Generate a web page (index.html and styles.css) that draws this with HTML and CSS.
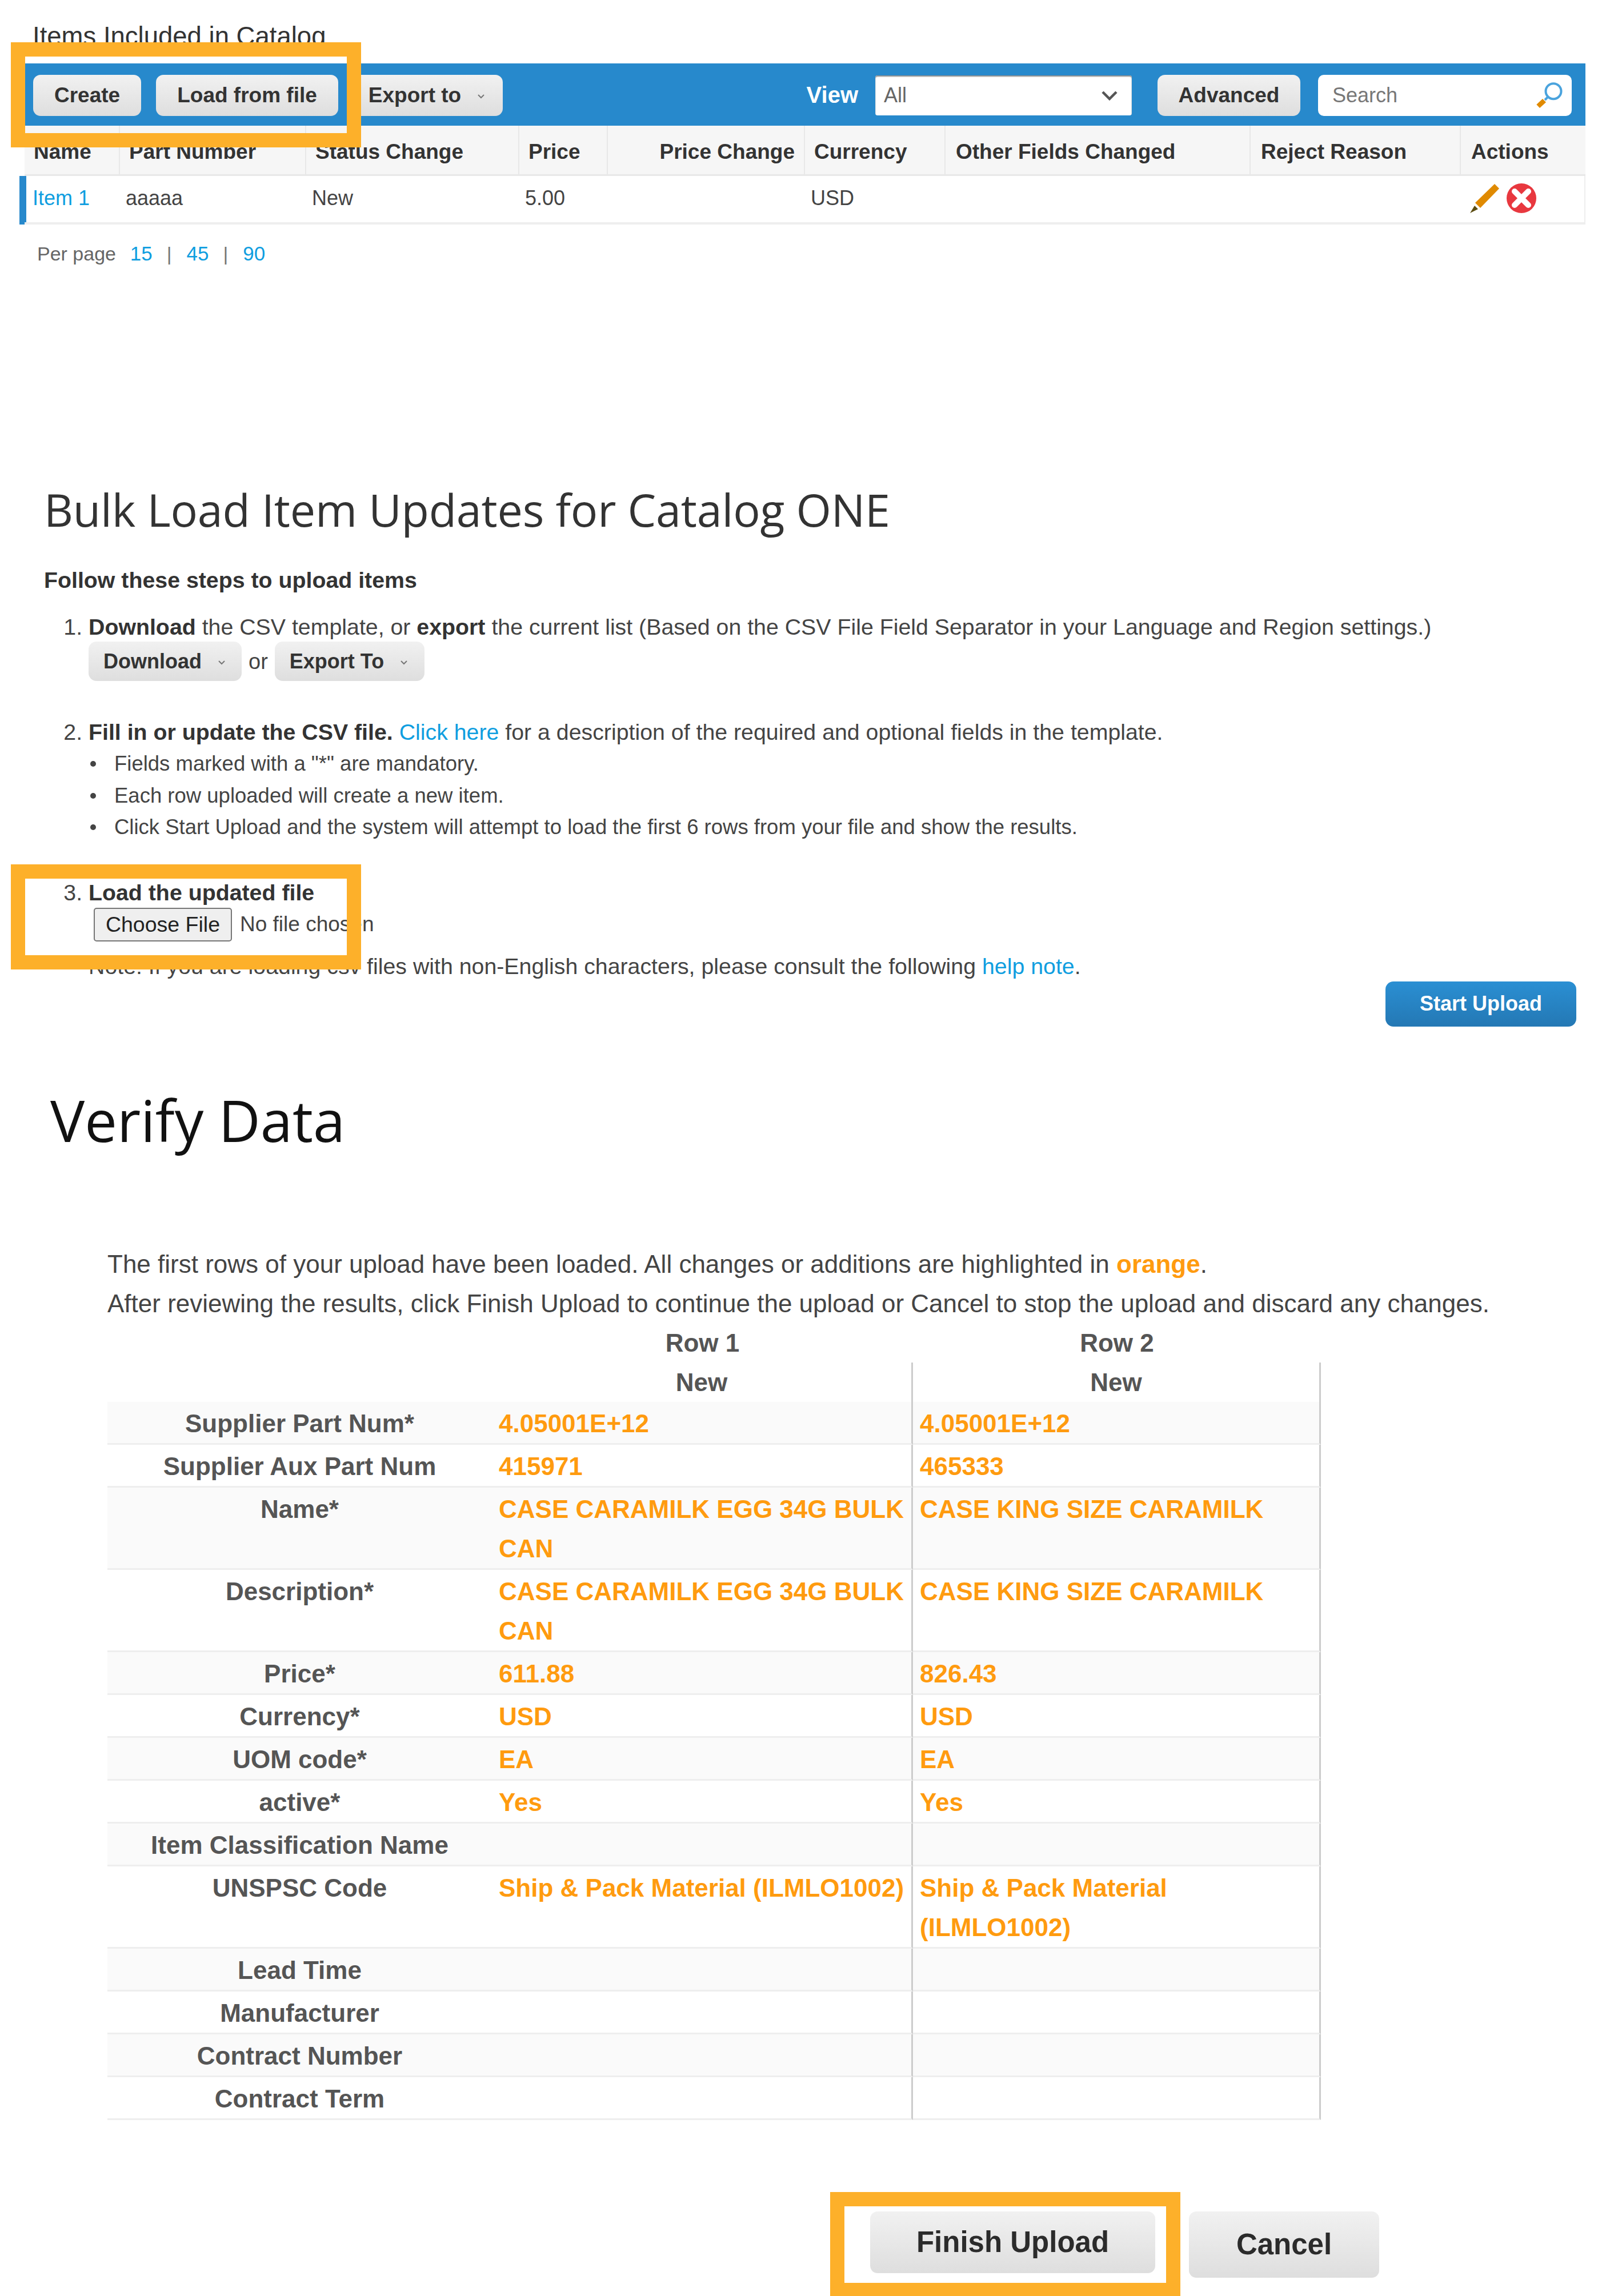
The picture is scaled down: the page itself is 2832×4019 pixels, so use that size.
FILE: index.html
```html
<!DOCTYPE html>
<html lang="en">
<head>
    <meta charset="UTF-8">
    <title>Catalog Upload Steps</title>
    <link rel="stylesheet" href="styles.css">
</head>
<body>
    <!-- Step 1: items list -->
    <section class="catalog">
        <h2 class="catalog-title">Items Included in Catalog</h2>
        <div class="toolbar">
            <button class="btn">Create</button>
            <button class="btn">Load from file</button>
            <button class="btn btn-export">Export to
                <svg class="caret" viewBox="0 0 14 9"><path d="M2 2l5 5 5-5"/></svg>
            </button>
            <span class="view-label">View</span>
            <div class="view-select">
                <span>All</span>
                <svg class="select-caret" viewBox="0 0 30 18"><path d="M3 3l12 12L27 3"/></svg>
            </div>
            <button class="btn btn-advanced">Advanced</button>
            <div class="search">
                <span>Search</span>
                <svg class="search-icon" viewBox="0 0 46 46">
                    <circle cx="30" cy="15.7" r="13.5"/>
                    <path class="search-neck" d="M20 26l-5 5"/>
                    <path class="search-handle" d="M0.3 39L11 29l6 6L6 45z"/>
                </svg>
            </div>
        </div>
        <table class="items">
            <colgroup>
                <col class="c-name"><col class="c-part"><col class="c-status"><col class="c-price">
                <col class="c-change"><col class="c-currency"><col class="c-other"><col class="c-reject"><col class="c-actions">
            </colgroup>
            <thead>
                <tr>
                    <th>Name</th>
                    <th>Part Number</th>
                    <th>Status Change</th>
                    <th>Price</th>
                    <th class="align-right">Price Change</th>
                    <th>Currency</th>
                    <th>Other Fields Changed</th>
                    <th>Reject Reason</th>
                    <th>Actions</th>
                </tr>
            </thead>
            <tbody>
                <tr>
                    <td class="item-name"><a href="#">Item 1</a></td>
                    <td>aaaaa</td>
                    <td>New</td>
                    <td>5.00</td>
                    <td></td>
                    <td>USD</td>
                    <td></td>
                    <td></td>
                    <td class="item-actions">
                        <div class="action-icons">
                            <svg class="action-icon" viewBox="0 0 52 52">
                                <path fill="#e08a00" d="M43 1l8 8-33 34-9-9z"/>
                                <path fill="#5c4d12" d="M8 39l6 6-14 7z"/>
                            </svg>
                            <svg class="action-icon" viewBox="0 0 52 52">
                                <circle cx="26" cy="26" r="26" fill="#e8383f"/>
                                <path d="M14 14l24 24M38 14L14 38" stroke="#fff" stroke-width="10" stroke-linecap="round"/>
                            </svg>
                        </div>
                    </td>
                </tr>
            </tbody>
        </table>
        <div class="per-page">
            <span class="per-page-label">Per page</span>
            <a href="#">15</a><span class="pipe">|</span><a href="#">45</a><span class="pipe">|</span><a href="#">90</a>
        </div>
        <div class="frame frame-top"></div>
    </section>

    <!-- Step 2: bulk load -->
    <section class="bulk">
        <h1 class="bulk-title">Bulk Load Item Updates for Catalog ONE</h1>
        <p class="bulk-lead">Follow these steps to upload items</p>
        <ol class="steps">
            <li>
                <b>Download</b> the CSV template, or <b>export</b> the current list (Based on the CSV File Field Separator in your Language and Region settings.)
                <div class="step-actions">
                    <button class="btn btn-small btn-download">Download
                        <svg class="caret" viewBox="0 0 14 9"><path d="M2 2l5 5 5-5"/></svg>
                    </button>
                    <span class="step-or">or</span>
                    <button class="btn btn-small">Export To
                        <svg class="caret" viewBox="0 0 14 9"><path d="M2 2l5 5 5-5"/></svg>
                    </button>
                </div>
            </li>
            <li class="step-two">
                <b>Fill in or update the CSV file.</b> <a href="#">Click here</a> for a description of the required and optional fields in the template.
                <ul class="notes">
                    <li>Fields marked with a "*" are mandatory.</li>
                    <li>Each row uploaded will create a new item.</li>
                    <li>Click Start Upload and the system will attempt to load the first 6 rows from your file and show the results.</li>
                </ul>
            </li>
            <li class="step-three">
                <b>Load the updated file</b>
                <div class="file-row">
                    <button class="choose-file">Choose File</button>
                    <span>No file chosen</span>
                </div>
                <p class="step-note">Note: If you are loading csv files with non-English characters, please consult the following <a href="#">help note</a>.</p>
            </li>
        </ol>
        <div class="start-row">
            <button class="btn-primary">Start Upload</button>
        </div>
        <div class="frame frame-file"></div>
    </section>

    <!-- Step 3: verify -->
    <section class="verify">
        <h1 class="verify-title">Verify Data</h1>
        <p class="verify-intro">The first rows of your upload have been loaded. All changes or additions are highlighted in <span class="changed">orange</span>.</p>
        <p class="verify-intro">After reviewing the results, click Finish Upload to continue the upload or Cancel to stop the upload and discard any changes.</p>
        <table class="preview">
            <thead>
                <tr class="preview-row-no"><th></th><th>Row 1</th><th>Row 2</th></tr>
                <tr class="preview-status"><th></th><th class="ruled">New</th><th class="ruled">New</th></tr>
            </thead>
            <tbody>
                <tr><th>Supplier Part Num*</th><td>4.05001E+12</td><td>4.05001E+12</td></tr>
                <tr><th>Supplier Aux Part Num</th><td>415971</td><td>465333</td></tr>
                <tr><th>Name*</th><td>CASE CARAMILK EGG 34G BULK CAN</td><td>CASE KING SIZE CARAMILK</td></tr>
                <tr><th>Description*</th><td>CASE CARAMILK EGG 34G BULK CAN</td><td>CASE KING SIZE CARAMILK</td></tr>
                <tr><th>Price*</th><td>611.88</td><td>826.43</td></tr>
                <tr><th>Currency*</th><td>USD</td><td>USD</td></tr>
                <tr><th>UOM code*</th><td>EA</td><td>EA</td></tr>
                <tr><th>active*</th><td>Yes</td><td>Yes</td></tr>
                <tr><th>Item Classification Name</th><td></td><td></td></tr>
                <tr><th>UNSPSC Code</th><td>Ship &amp; Pack Material (ILMLO1002)</td><td>Ship &amp; Pack Material (ILMLO1002)</td></tr>
                <tr><th>Lead Time</th><td></td><td></td></tr>
                <tr><th>Manufacturer</th><td></td><td></td></tr>
                <tr><th>Contract Number</th><td></td><td></td></tr>
                <tr><th>Contract Term</th><td></td><td></td></tr>
            </tbody>
        </table>
        <div class="verify-actions">
            <div class="frame-finish">
                <button class="btn btn-large">Finish Upload</button>
            </div>
            <button class="btn btn-large btn-cancel">Cancel</button>
        </div>
    </section>
</body>
</html>
```

FILE: styles.css
```css
body {
    margin: 0;
    background-color: #fff;
    color: #444;
    font-family: "Liberation Sans", Arial, sans-serif;
}

a {
    color: #0f9ee0;
    text-decoration: none;
}

button {
    font-family: inherit;
}

.btn {
    height: 72px;
    padding: 0 37px;
    border: 0;
    border-radius: 13px;
    background: linear-gradient(#f1f1f1, #dedede);
    color: #333;
    font-size: 37px;
    font-weight: bold;
    white-space: nowrap;
}

.caret {
    width: 14px;
    height: 9px;
    margin-left: 18px;
    fill: none;
    stroke: #777;
    stroke-width: 2;
    vertical-align: middle;
}

/* Orange call-out frames drawn over the page */
.frame {
    position: absolute;
    left: 19px;
    width: 563px;
    border: 25px solid #fdb02a;
}

.frame-top {
    top: 74px;
    height: 134px;
}

.frame-file {
    top: 1513px;
    height: 134px;
}

/* Items list */
.catalog-title {
    margin: 38px 0 0 57px;
    color: #333;
    font-size: 45.5px;
    font-weight: normal;
    line-height: 52px;
}

.toolbar {
    display: flex;
    align-items: center;
    width: 2732px;
    height: 109px;
    margin: 21px 0 0 43px;
    padding: 2px 24px 0 15px;
    box-sizing: border-box;
    background-color: #2789cc;
}

.toolbar .btn {
    margin-right: 26px;
}

.toolbar .btn-export {
    width: 273px;
    padding: 0 0 0 38px;
    text-align: left;
    margin-left: -11px;
}

.view-label {
    margin-left: auto;
    margin-right: 30px;
    color: #fff;
    font-size: 40px;
    font-weight: bold;
}

.view-select {
    display: flex;
    align-items: center;
    justify-content: space-between;
    width: 449px;
    height: 70px;
    padding: 0 24px 0 15px;
    box-sizing: border-box;
    border-radius: 4px;
    background-color: #fff;
    box-shadow: inset 0 2px 2px #888;
    color: #666;
    font-size: 36px;
}

.select-caret {
    width: 30px;
    height: 18px;
    fill: none;
    stroke: #555;
    stroke-width: 4.5;
}

.toolbar .btn-advanced {
    width: 250px;
    margin-left: 45px;
    margin-right: 31px;
    padding: 0;
}

.search {
    display: flex;
    align-items: center;
    justify-content: space-between;
    width: 444px;
    height: 72px;
    padding: 0 16px 0 25px;
    box-sizing: border-box;
    border-radius: 10px;
    background-color: #fff;
    color: #777;
    font-size: 36px;
}

.search-icon {
    width: 46px;
    height: 46px;
}

.search-icon circle,
.search-neck {
    fill: none;
    stroke: #4aa3dd;
    stroke-width: 4;
}

.search-handle {
    fill: #e08a00;
}

.items {
    width: 2732px;
    margin-left: 43px;
    border-collapse: separate;
    border-spacing: 0;
    table-layout: fixed;
    font-size: 36px;
}

.c-name { width: 167px; }
.c-part { width: 326px; }
.c-status { width: 373px; }
.c-price { width: 155px; }
.c-change { width: 345px; }
.c-currency { width: 246px; }
.c-other { width: 534px; }
.c-reject { width: 368px; }
.c-actions { width: 218px; }

.items th {
    height: 88px;
    padding: 7px 0 0 16px;
    box-sizing: border-box;
    border-right: 2px solid #e8e8e8;
    border-bottom: 3px solid #e8e8e8;
    background-color: #f6f6f6;
    color: #333;
    font-size: 37px;
    text-align: left;
    white-space: nowrap;
}

.items th:nth-child(n+7) {
    padding-left: 18px;
}

.items th:last-child {
    border-right: 0;
}

.items th.align-right {
    padding: 7px 16px 0 0;
    text-align: right;
}

.items td {
    height: 85px;
    padding: 0 0 4px 10px;
    box-sizing: border-box;
    border-bottom: 4px solid #eee;
    color: #444;
}

.items td:last-child {
    border-right: 2px solid #eee;
}

.items .item-name {
    padding-left: 14px;
    box-shadow: inset 3px 0 0 #2789cc, -9px 0 0 #2789cc;
}

.items .item-actions {
    padding-left: 16px;
}

.action-icons {
    display: flex;
    gap: 12px;
}

.action-icon {
    width: 52px;
    height: 52px;
}

.per-page {
    margin: 31px 0 0 65px;
    color: #666;
    font-size: 35px;
    line-height: 40px;
}

.per-page-label {
    margin-right: 15px;
    font-size: 34px;
}

.pipe {
    margin: 0 26px 0 25px;
    color: #777;
    font-size: 34px;
}

/* Bulk load */
.bulk-title {
    margin: 378px 0 0 77px;
    color: #333;
    font-family: "Open Sans", sans-serif;
    font-size: 79px;
    font-weight: normal;
    letter-spacing: -0.2px;
    line-height: 100px;
}

.bulk-lead {
    margin: 48px 0 0 77px;
    color: #333;
    font-size: 39.3px;
    font-weight: bold;
    line-height: 50px;
}

.steps {
    margin: 32px 0 0 0;
    padding: 0 0 0 155px;
    font-size: 39.3px;
    line-height: 50px;
}

.steps b {
    color: #333;
}

.step-actions {
    display: flex;
    align-items: center;
    gap: 12px;
    margin-top: 1px;
}

.step-or {
    font-size: 38px;
}

.btn-small {
    width: 262px;
    height: 69px;
    padding: 0 0 0 26px;
    border-radius: 14px;
    font-size: 36px;
    text-align: left;
}

.btn-download {
    width: 268px;
}

.step-two {
    margin-top: 64px;
}

.notes {
    margin: 3px 0 0 0;
    padding: 0 0 0 45px;
    font-size: 36.5px;
    line-height: 55.5px;
    list-style: none;
}

.notes li::before {
    content: "";
    display: inline-block;
    width: 10px;
    height: 10px;
    margin: 0 32px 0 -42px;
    border-radius: 50%;
    background-color: #444;
    vertical-align: 7px;
}

.step-three {
    margin-top: 61px;
}

.file-row {
    display: flex;
    align-items: center;
    gap: 14px;
    margin: 2px 0 0 9px;
    font-size: 37px;
}

.choose-file {
    width: 242px;
    height: 59px;
    padding: 0;
    border: 2px solid #767676;
    border-radius: 5px;
    background-color: #efefef;
    color: #222;
    font-size: 37.5px;
}

.step-note {
    margin: 18px 0 0 0;
}

.start-row {
    display: flex;
    justify-content: flex-end;
    margin-top: 2px;
    padding-right: 73px;
}

.btn-primary {
    width: 334px;
    height: 79px;
    border: 0;
    border-radius: 14px;
    background: linear-gradient(#2a8fd3, #2478b4);
    color: #fff;
    font-size: 36px;
    font-weight: bold;
}

/* Verify */
.verify-title {
    margin: 103px 0 0 88px;
    color: #111;
    font-family: "Open Sans", sans-serif;
    font-size: 101px;
    font-weight: normal;
    line-height: 120px;
}

.verify-intro {
    margin: 0 0 0 188px;
    color: #444;
    font-size: 44px;
    line-height: 69px;
}

.verify-intro:first-of-type {
    margin-top: 158px;
}

.changed {
    color: #ff9b0f;
    font-weight: bold;
}

.preview {
    width: 2124px;
    margin: 0 0 0 188px;
    border-collapse: separate;
    border-spacing: 0;
    table-layout: fixed;
    font-size: 44px;
    line-height: 69px;
}

.preview th {
    padding: 3px 0 0;
    color: #555;
}

.preview td {
    padding: 3px 10px 0 12px;
    color: #ff9b0f;
    font-weight: bold;
    vertical-align: top;
}

.preview th:nth-child(1) {
    width: 673px;
}

.preview th:nth-child(2) {
    width: 737px;
}

.preview-row-no th,
.preview-status th {
    padding: 0;
    height: 68px;
}

.preview tbody th {
    vertical-align: top;
}

.preview tbody th,
.preview tbody td {
    border-bottom: 3px solid #eee;
}

.preview tbody tr:nth-child(odd) {
    background-color: #fafafa;
}

.preview .ruled,
.preview tbody td {
    border-right: 3px solid #ccc;
}

.verify-actions {
    display: flex;
    align-items: flex-start;
    gap: 15px;
    margin-top: 126px;
    padding-left: 1453px;
}

.frame-finish {
    width: 563px;
    height: 134px;
    border: 25px solid #fdb02a;
}

.btn-large {
    width: 499px;
    height: 108px;
    color: #2b2b2b;
    font-size: 51px;
}

.frame-finish .btn-large {
    margin: 9px 0 0 45px;
}

.btn-cancel {
    width: 333px;
    height: 116px;
    margin-top: 34px;
}
```
